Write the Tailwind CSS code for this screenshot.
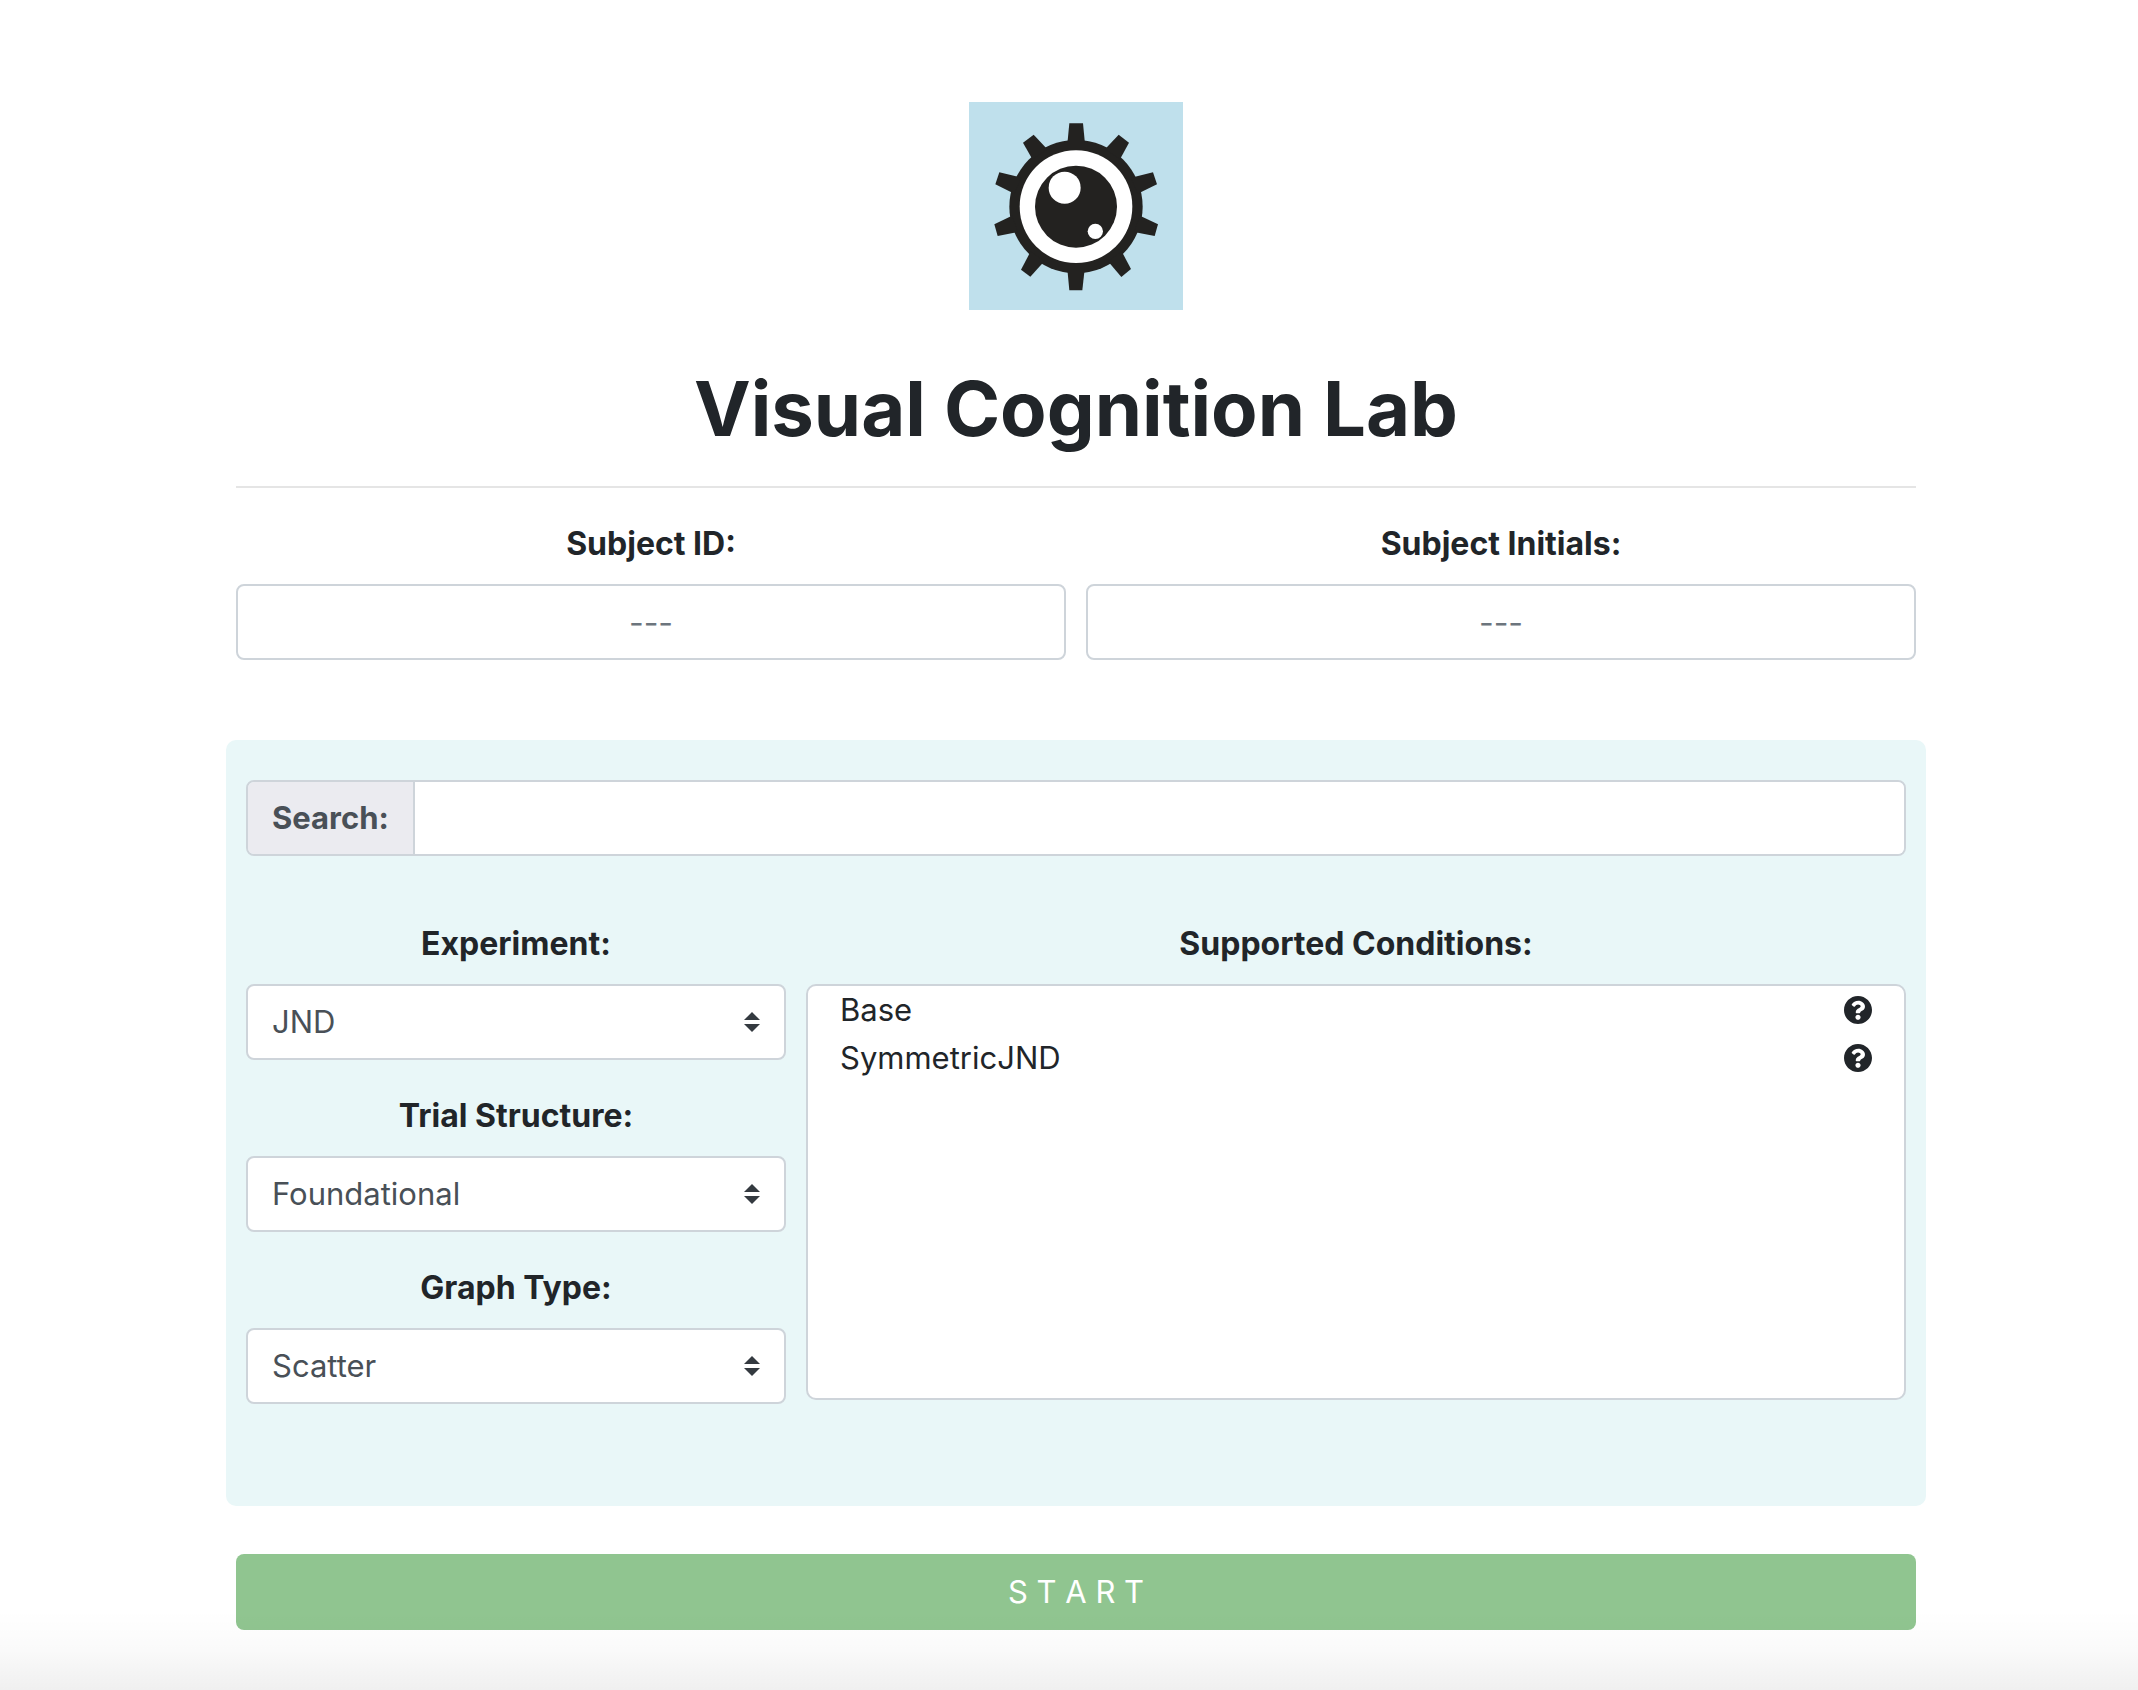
<!DOCTYPE html>
<html lang="en">
<head>
<meta charset="utf-8">
<meta name="viewport" content="width=device-width, initial-scale=1">
<title>Visual Cognition Lab</title>
<script src="https://cdn.jsdelivr.net/npm/@tailwindcss/browser@4"></script>
</head>
<body class="relative min-h-screen bg-white pl-[14px] font-[Inter,sans-serif] text-[32px] leading-[48px] text-[#212529]">
<main class="mx-auto flex w-full max-w-[1680px] flex-col pt-[102px] pb-[60px]">
  <header class="flex flex-col items-center border-b-2 border-[#e5e5e5] pb-[30px]">
    <svg class="h-[208px] w-[214px]" viewBox="30 30 642 624" preserveAspectRatio="none" role="img" aria-label="Lab logo">
      <rect x="30" y="30" width="642" height="624" fill="#bfe0ec"/>
      <g fill="#232220">
        <circle cx="351" cy="344" r="200"/>
        <path d="M331 94h41l6 62h-53z"/>
        <path d="M479 128l31 24-27 50-45-30z"/>
        <path d="M582 241l12 36-58 28-20-48z"/>
        <path d="M597 397l-10 35-62-12 18-49z"/>
        <path d="M516 531l-29 24-40-47 41-30z"/>
        <path d="M331 595h39l7-64h-52z"/>
        <path d="M186 533l28 21 42-46-41-30z"/>
        <path d="M106 397l10 35 61-12-18-49z"/>
        <path d="M121 241l-12 36 57 28 21-48z"/>
        <path d="M224 128l-32 24 28 50 45-30z"/>
      </g>
      <circle cx="351" cy="344" r="169" fill="#fff"/>
      <circle cx="351" cy="344" r="123" fill="#232220"/>
      <circle cx="317" cy="287" r="48" fill="#fff"/>
      <circle cx="409" cy="418" r="23" fill="#fff"/>
    </svg>
    <h1 class="mt-[50px] text-center text-[76px] leading-[96px] font-bold">Visual Cognition Lab</h1>
  </header>

  <form class="flex flex-col">
    <div class="mt-8 grid grid-cols-2 gap-5">
      <div class="flex flex-col gap-4">
        <label for="subject-id" class="text-center font-bold">Subject ID:</label>
        <input id="subject-id" type="text" placeholder="---" class="h-[76px] w-full rounded-lg border-2 border-[#ced4da] bg-white px-6 text-center text-[#495057] placeholder:text-[#6c757d]">
      </div>
      <div class="flex flex-col gap-4">
        <label for="subject-initials" class="text-center font-bold">Subject Initials:</label>
        <input id="subject-initials" type="text" placeholder="---" class="h-[76px] w-full rounded-lg border-2 border-[#ced4da] bg-white px-6 text-center text-[#495057] placeholder:text-[#6c757d]">
      </div>
    </div>

    <section class="-mx-[10px] mt-20 rounded-[10px] bg-[#e9f7f8] px-5 pt-10 pb-[102px]">
      <div class="flex h-[76px] overflow-hidden rounded-lg border-2 border-[#ced4da]">
        <label for="search" class="flex items-center border-r-2 border-[#ced4da] bg-[#ebebf0] px-6 text-[31px] font-bold text-[#495057]">Search:</label>
        <input id="search" type="text" class="min-w-0 flex-1 bg-white px-6 text-[#495057]">
      </div>

      <div class="mt-16 grid grid-cols-3 gap-5">
        <div class="flex flex-col gap-8">
          <div class="flex flex-col gap-4">
            <label for="experiment" class="text-center font-bold">Experiment:</label>
            <div class="relative">
              <select id="experiment" class="block h-[76px] w-full appearance-none rounded-lg border-2 border-[#ced4da] bg-white px-6 text-[31px] text-[#495057]"><option>JND</option></select>
              <svg class="pointer-events-none absolute inset-y-0 right-[26px] my-auto h-5 w-4" viewBox="0 0 4 5" fill="#343a40" aria-hidden="true"><path d="M2 0L0 2h4zm0 5L0 3h4z"/></svg>
            </div>
          </div>
          <div class="flex flex-col gap-4">
            <label for="structure" class="text-center font-bold">Trial Structure:</label>
            <div class="relative">
              <select id="structure" class="block h-[76px] w-full appearance-none rounded-lg border-2 border-[#ced4da] bg-white px-6 text-[31px] text-[#495057]"><option>Foundational</option></select>
              <svg class="pointer-events-none absolute inset-y-0 right-[26px] my-auto h-5 w-4" viewBox="0 0 4 5" fill="#343a40" aria-hidden="true"><path d="M2 0L0 2h4zm0 5L0 3h4z"/></svg>
            </div>
          </div>
          <div class="flex flex-col gap-4">
            <label for="graph" class="text-center font-bold">Graph Type:</label>
            <div class="relative">
              <select id="graph" class="block h-[76px] w-full appearance-none rounded-lg border-2 border-[#ced4da] bg-white px-6 text-[31px] text-[#495057]"><option>Scatter</option></select>
              <svg class="pointer-events-none absolute inset-y-0 right-[26px] my-auto h-5 w-4" viewBox="0 0 4 5" fill="#343a40" aria-hidden="true"><path d="M2 0L0 2h4zm0 5L0 3h4z"/></svg>
            </div>
          </div>
        </div>

        <div class="col-span-2 flex flex-col gap-4 pb-1">
          <h2 id="conditions" class="text-center font-bold">Supported Conditions:</h2>
          <ul aria-labelledby="conditions" class="flex-1 rounded-[10px] border-2 border-[#ced4da] bg-white px-8 text-[31px]">
            <li class="flex h-12 items-center justify-between">
              <button type="button">Base</button>
              <button type="button" aria-label="About Base"><svg class="size-7" viewBox="8 8 496 496" fill="#212529" aria-hidden="true"><path d="M504 256c0 137-111 248-248 248S8 393 8 256 119 8 256 8s248 111 248 248zM262.700 90c-54.500 0-89.300 23-116.500 63.800-3.500 5.300-2.400 12.400 2.700 16.300l34.700 26.300c5.200 3.900 12.600 3 16.700-2.100 17.900-22.700 30.100-35.800 57.300-35.800 20.400 0 45.700 13.100 45.700 33 0 15-12.400 22.700-32.500 34C247.100 238.500 216 254.900 216 296v4c0 6.600 5.400 12 12 12h56c6.600 0 12-5.400 12-12v-1.300c0-28.500 83.200-29.600 83.200-106.700 0-58-60.200-102-116.500-102zM256 338c-25.400 0-46 20.600-46 46s20.600 46 46 46 46-20.600 46-46-20.600-46-46-46z"/></svg></button>
            </li>
            <li class="flex h-12 items-center justify-between">
              <button type="button">SymmetricJND</button>
              <button type="button" aria-label="About SymmetricJND"><svg class="size-7" viewBox="8 8 496 496" fill="#212529" aria-hidden="true"><path d="M504 256c0 137-111 248-248 248S8 393 8 256 119 8 256 8s248 111 248 248zM262.700 90c-54.500 0-89.300 23-116.500 63.800-3.500 5.300-2.400 12.400 2.700 16.300l34.700 26.300c5.200 3.900 12.600 3 16.700-2.100 17.900-22.700 30.100-35.800 57.300-35.800 20.400 0 45.700 13.100 45.700 33 0 15-12.400 22.700-32.500 34C247.100 238.500 216 254.900 216 296v4c0 6.600 5.400 12 12 12h56c6.600 0 12-5.400 12-12v-1.300c0-28.500 83.200-29.600 83.200-106.700 0-58-60.200-102-116.500-102zM256 338c-25.400 0-46 20.600-46 46s20.600 46 46 46 46-20.600 46-46-20.600-46-46-46z"/></svg></button>
            </li>
          </ul>
        </div>
      </div>
    </section>

    <button type="submit" class="mt-12 h-[76px] w-full rounded-lg bg-[#90c590] text-[31px] text-white">S T A R T</button>
  </form>
</main>
<div class="pointer-events-none absolute inset-x-0 bottom-0 h-20 bg-linear-to-b from-black/0 via-black/2 to-black/6"></div>
</body>
</html>
